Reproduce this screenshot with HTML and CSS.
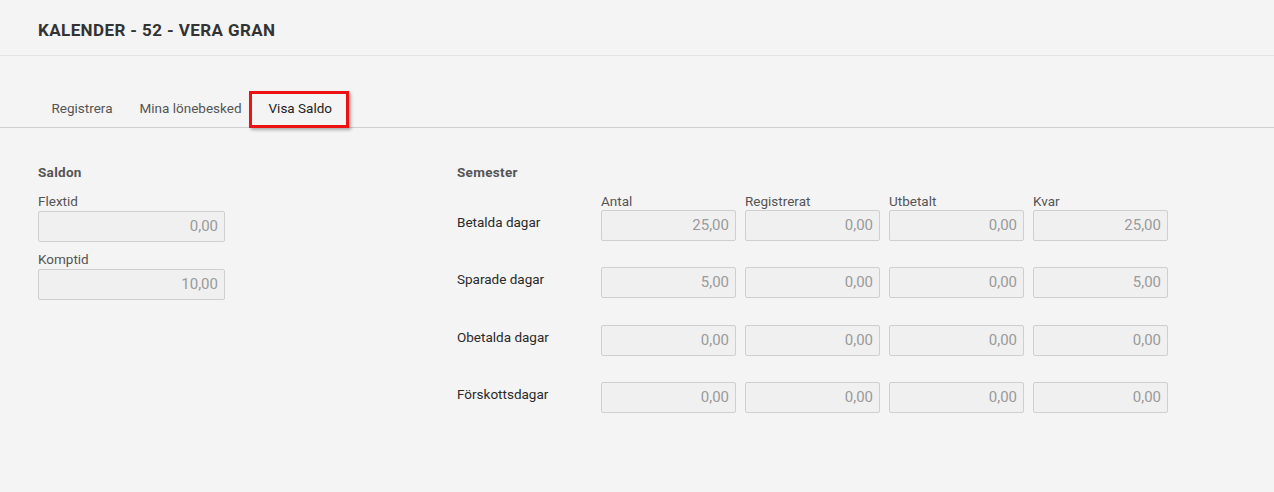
FILE: index.html
```html
<!DOCTYPE html>
<html>
<head>
    <title>Kalender - Visa Saldo</title>
    <link rel="stylesheet" href="styles.css">
</head>
<body>
    <div class="page-header">
        <h1>KALENDER - 52 - VERA GRAN</h1>
    </div>

    <div class="tabs">
        <div class="tab">Registrera</div>
        <div class="tab">Mina lönebesked</div>
        <div class="tab active">Visa Saldo</div>
    </div>

    <div class="content">
        <!-- Saldon -->
        <div class="saldon">
            <h2>Saldon</h2>
            <div class="field">
                <label>Flextid</label>
                <div class="input">0,00</div>
            </div>
            <div class="field">
                <label>Komptid</label>
                <div class="input">10,00</div>
            </div>
        </div>

        <!-- Semester -->
        <div class="semester">
            <h2>Semester</h2>
            <div class="semester-grid">
                <div></div>
                <div class="col-label">Antal</div>
                <div class="col-label">Registrerat</div>
                <div class="col-label">Utbetalt</div>
                <div class="col-label">Kvar</div>

                <div class="row-label">Betalda dagar</div>
                <div class="input">25,00</div>
                <div class="input">0,00</div>
                <div class="input">0,00</div>
                <div class="input">25,00</div>

                <div class="row-label">Sparade dagar</div>
                <div class="input">5,00</div>
                <div class="input">0,00</div>
                <div class="input">0,00</div>
                <div class="input">5,00</div>

                <div class="row-label">Obetalda dagar</div>
                <div class="input">0,00</div>
                <div class="input">0,00</div>
                <div class="input">0,00</div>
                <div class="input">0,00</div>

                <div class="row-label">Förskottsdagar</div>
                <div class="input">0,00</div>
                <div class="input">0,00</div>
                <div class="input">0,00</div>
                <div class="input">0,00</div>
            </div>
        </div>
    </div>
</body>
</html>
```

FILE: styles.css
```css
* {
    margin: 0;
    padding: 0;
    box-sizing: border-box;
}

body {
    font-family: Roboto, 'Liberation Sans', sans-serif;
    background: #f4f4f4;
    color: #333;
    font-size: 13.5px;
}

.page-header {
    height: 56px;
    padding: 0 38px;
    display: flex;
    align-items: center;
    border-bottom: 1px solid #e3e3e3;
}

h1 {
    font-size: 17px;
    font-weight: 700;
    color: #333;
    letter-spacing: 0.4px;
    margin-top: 5px;
}

/* Flikar */
.tabs {
    margin-top: 32px;
    padding: 0 38px;
    display: flex;
    height: 40px;
    border-bottom: 1px solid #cfcfcf;
}

.tab {
    padding: 0 13.5px;
    line-height: 40px;
    font-size: 13.5px;
    color: #555;
}

.tab.active {
    color: #222;
    position: relative;
}

.tab.active::after {
    content: '';
    position: absolute;
    left: -6px;
    right: -3px;
    top: 3px;
    bottom: -1px;
    border: 3px solid #ee1111;
    box-shadow: 2px 2px 3px rgba(0, 0, 0, 0.3);
}

.content {
    display: flex;
    padding: 36px 38px 0;
}

h2 {
    font-size: 13.5px;
    font-weight: 700;
    color: #555;
    letter-spacing: 0.3px;
    height: 16px;
    line-height: 16px;
    margin-bottom: 14px;
}

.saldon {
    width: 419px;
}

.field {
    display: flex;
    flex-direction: column;
    margin-bottom: 10px;
}

.field label {
    color: #555;
    height: 14px;
    line-height: 14px;
    margin-bottom: 3px;
}

.saldon .input {
    width: 187px;
}

.input {
    height: 31px;
    background: #f0f0f0;
    border: 1px solid #cfcfcf;
    border-radius: 2px;
    color: #9a9a9a;
    font-size: 15px;
    text-align: right;
    padding: 0 6px;
    line-height: 29px;
}

.semester-grid {
    display: grid;
    grid-template-columns: 135px repeat(4, 135px);
    column-gap: 9px;
    grid-template-rows: 16px 31px 26px 31px 27px 31px 26px 31px;
}

.col-label {
    color: #555;
    line-height: 14px;
}

.row-label {
    color: #2a2a2a;
    align-self: center;
    margin-top: -7px;
}

.semester-grid > .row-label:nth-of-type(n) {
    grid-column: 1;
}

.semester-grid > div:nth-child(n+11):nth-child(-n+15) {
    grid-row: 4;
}

.semester-grid > div:nth-child(n+16):nth-child(-n+20) {
    grid-row: 6;
}

.semester-grid > div:nth-child(n+21):nth-child(-n+25) {
    grid-row: 8;
}
```
